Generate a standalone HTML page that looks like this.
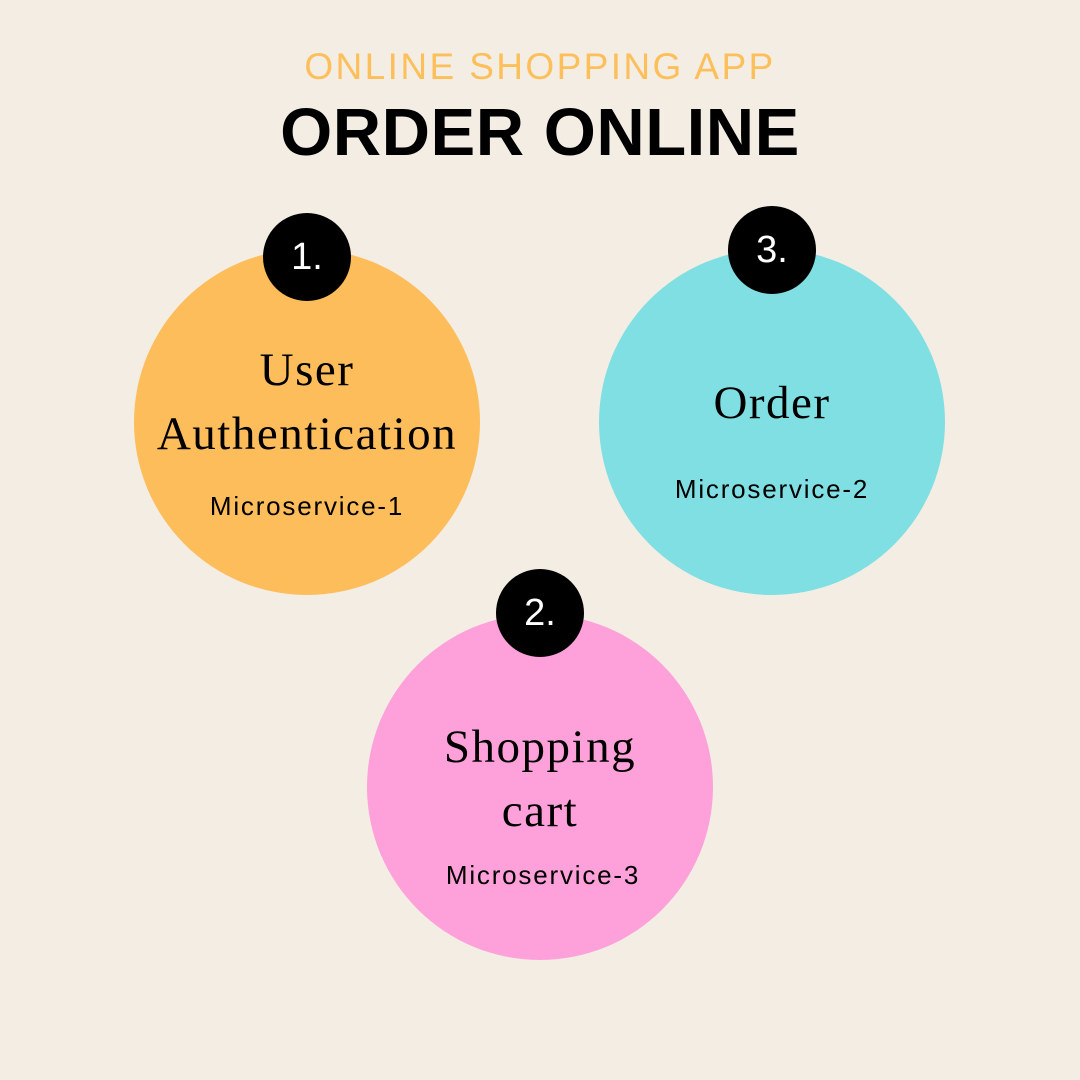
<!DOCTYPE html>
<html><head><style>
body{margin:0;width:1080px;height:1080px;background:#f4ede4;position:relative;overflow:hidden;font-family:"Liberation Sans",sans-serif}
.t{position:absolute;left:0;width:1080px;text-align:center}
.c{position:absolute;width:346px;height:346px;border-radius:50%}
.b{position:absolute;width:88px;height:88px;border-radius:50%;background:#000;color:#fff;font-size:38px;line-height:88px;text-align:center}
.s{position:absolute;text-align:center;font-family:"Liberation Serif",serif;font-size:47px;line-height:64px;color:#000;width:400px;letter-spacing:1.5px}
.m{position:absolute;text-align:center;font-size:26px;color:#000;width:300px;letter-spacing:1.8px}
</style></head><body>
<div class="t" style="top:46px;font-size:37px;color:#fdbf5a;letter-spacing:2.4px">ONLINE SHOPPING APP</div>
<div class="t" style="top:94px;font-size:67px;font-weight:bold;letter-spacing:0.5px;color:#000">ORDER ONLINE</div>
<div class="c" style="left:134px;top:249px;background:#fdbd5b"></div>
<div class="c" style="left:599px;top:249px;background:#7fdfe3"></div>
<div class="c" style="left:367px;top:614px;background:#fea0da"></div>
<div class="b" style="left:263px;top:213px">1.</div>
<div class="b" style="left:728px;top:206px">3.</div>
<div class="b" style="left:496px;top:569px">2.</div>
<div class="s" style="left:107px;top:338px">User<br>Authentication</div>
<div class="m" style="left:157px;top:491px">Microservice-1</div>
<div class="s" style="left:572px;top:371px">Order</div>
<div class="m" style="left:622px;top:474px">Microservice-2</div>
<div class="s" style="left:340px;top:715px">Shopping<br>cart</div>
<div class="m" style="left:393px;top:860px">Microservice-3</div>
</body></html>
